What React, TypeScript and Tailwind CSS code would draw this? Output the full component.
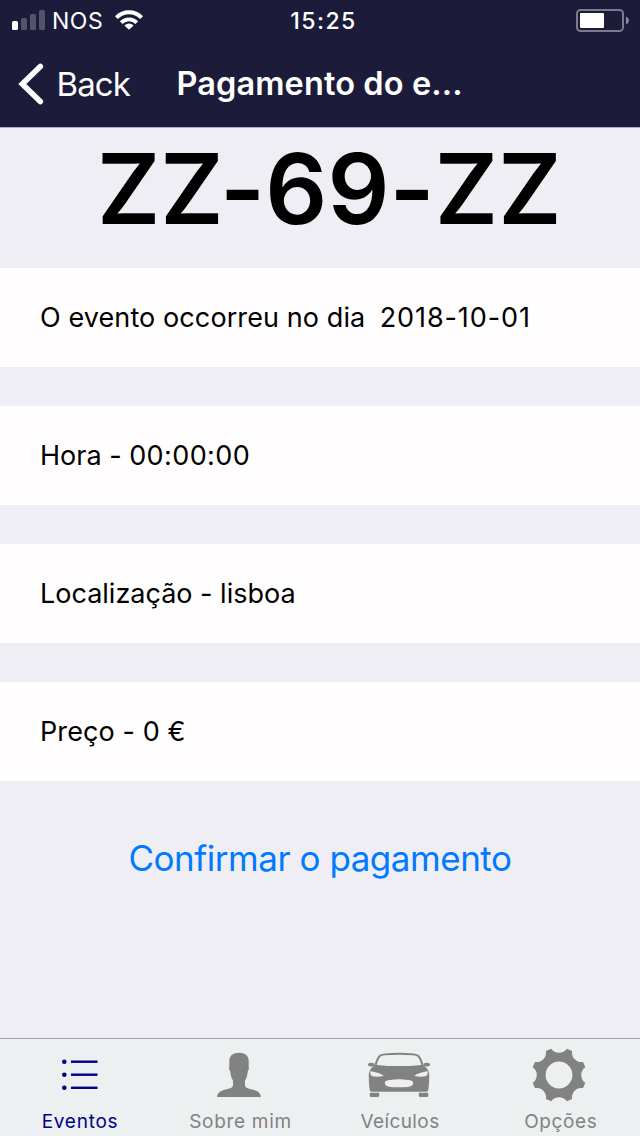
import type { ReactNode } from "react";

function StatusBar() {
  return (
    <div className="grid h-[41px] grid-cols-3 items-center text-white">
      <div className="flex items-center pl-3">
        <svg width="33" height="20" viewBox="0 0 33 20" className="mb-px shrink-0">
          <rect x="0" y="11" width="6" height="9" rx="1.5" fill="#fff" />
          <rect x="9" y="8" width="6" height="12" rx="1.5" fill="#53536b" />
          <rect x="18" y="4" width="6" height="16" rx="1.5" fill="#53536b" />
          <rect x="27" y="0" width="6" height="20" rx="1.5" fill="#53536b" />
        </svg>
        <span className="ml-[7px] pt-[2px] text-[23px] leading-none tracking-[0.5px]">NOS</span>
        <svg width="28" height="20" viewBox="0 0 28 20" className="mb-px ml-[12px] shrink-0">
          <g fill="none" stroke="#fff" strokeWidth="4">
            <path d="M1.4 7.6A17.6 17.6 0 0 1 26.6 7.6" />
            <path d="M6.2 12.6A11 11 0 0 1 21.8 12.6" strokeWidth="3.8" />
          </g>
          <path d="M14 19.8L9.4 15.4Q14 11.6 18.6 15.4Z" fill="#fff" />
        </svg>
      </div>
      <div className="pt-[2px] pl-[7px] text-center text-[23px] leading-none font-medium tracking-[1.5px]">15:25</div>
      <div className="flex justify-end pr-[11px]">
        <svg width="53" height="23" viewBox="0 0 53 23">
          <rect x="1" y="1" width="46" height="21" rx="3.5" fill="none" stroke="#7b7b8d" strokeWidth="2" />
          <rect x="4" y="4" width="24" height="15" rx="1" fill="#fff" />
          <path d="M50 7.5Q53 8.8 53 11.5T50 15.5Z" fill="#8b8b9b" />
        </svg>
      </div>
    </div>
  );
}

function NavBar() {
  return (
    <div className="flex h-[86px] items-center pl-[18px] text-white">
      <svg width="26" height="42" viewBox="0 0 26 42" className="mb-px shrink-0">
        <path d="M22.3 3.4L4.3 21L22.3 38.6" fill="none" stroke="#fff" strokeWidth="5.6" strokeLinecap="round" strokeLinejoin="miter" />
      </svg>
      <span className="ml-[12.5px] text-[33px] leading-none tracking-[-0.9px]">Back</span>
      <h1 className="ml-[46.5px] text-[32.5px] leading-none font-semibold tracking-[0.1px] whitespace-nowrap">Pagamento do e...</h1>
    </div>
  );
}

function Row({ children }: { children: ReactNode }) {
  return (
    <div className="flex h-[99px] items-center bg-[#fffdfe] pl-10 text-[27px] leading-none whitespace-pre">
      <p>{children}</p>
    </div>
  );
}

function ListIcon() {
  return (
    <svg width="36" height="52" viewBox="0 0 36 52" className="mr-px">
      {[11.7, 24.7, 37.8].map((y) => (
        <g key={y} fill="#00008b">
          <circle cx="2.3" cy={y} r="2.3" />
          <rect x="9" y={y - 1.2} width="26.5" height="2.4" />
        </g>
      ))}
    </svg>
  );
}

function PersonIcon() {
  return (
    <svg width="46" height="52" viewBox="0 0 46 52" fill="#828282" className="mr-0.5">
      <path d="M23 2.7C17.2 2.7 13.3 5.5 13.3 11V16.5C12.7 18.5 13.4 20 14.2 21C14.5 25.5 15.6 28.4 17 30.6V35C17 37.4 14.5 38.3 10.5 39.3C4.7 40.7 1.5 42.5 1 46.9H45C44.5 42.5 41.3 40.7 35.5 39.3C31.5 38.3 29 37.4 29 35V30.6C30.4 28.4 31.5 25.5 31.8 21C32.6 20 33.3 18.5 32.7 16.5V11C32.7 5.5 28.8 2.7 23 2.7Z" />
    </svg>
  );
}

function CarIcon() {
  return (
    <svg width="62" height="52" viewBox="0 0 62 52" className="mr-0.5">
      <g fill="#828282">
        <path d="M10.5 5.8C12 4.3 14 3.8 17 3.5C26 2.6 36 2.6 45 3.5C48 3.8 50 4.3 51.5 5.8C53.2 8 54.6 11.5 55.6 15.2L58.5 18C60.3 20.2 61.2 22 61.2 24.5C61.2 30 61 36 60.2 40.2C59.8 41.6 58.6 41.7 57 41.7H5C3.4 41.7 2.2 41.6 1.8 40.2C1 36 .8 30 .8 24.5C.8 22 1.7 20.2 3.5 18L6.4 15.2C7.4 11.5 8.8 8 10.5 5.8Z" />
        <ellipse cx="3.2" cy="14.6" rx="3.2" ry="1.9" />
        <ellipse cx="58.8" cy="14.6" rx="3.2" ry="1.9" />
        <path d="M1.8 42.8H11.2V45.8Q11.2 47 10 47H3Q1.8 47 1.8 45.8Z" />
        <path d="M50.8 42.8H60.2V45.8Q60.2 47 59 47H52Q50.8 47 50.8 45.8Z" />
      </g>
      <g fill="#ecf0f1">
        <path d="M12 7.2C13 6 14.3 5.6 17 5.3C26 4.5 36 4.5 45 5.3C47.7 5.6 49 6 50 7.2C51.6 9.3 52.6 11.8 53.3 14.9C38 16.5 24 16.5 8.7 14.9C9.4 11.8 10.4 9.3 12 7.2Z" />
        <path d="M2.2 21.2C7.5 22 13.5 23.5 15.7 26C11 27 5.2 27.2 3.3 25.6C2.4 24.6 2 23 2.2 21.2Z" />
        <path d="M59.8 21.2C54.5 22 48.5 23.5 46.3 26C51 27 56.8 27.2 58.7 25.6C59.6 24.6 60 23 59.8 21.2Z" />
        <path d="M22 30Q31 28.3 40 30C43.5 30.2 45.2 31.2 45.2 33C45.2 35.2 43 36.8 39.5 37Q31 37.7 22.5 37C19 36.8 16.8 35.2 16.8 33C16.8 31.2 18.5 30.2 22 30Z" />
      </g>
    </svg>
  );
}

const polar = (deg: number, r: number) => {
  const a = (deg * Math.PI) / 180;
  return `${(27 + r * Math.cos(a)).toFixed(2)} ${(25 + r * Math.sin(a)).toFixed(2)}`;
};

const gearPath =
  Array.from({ length: 8 }, (_, i) => {
    const c = i * 45;
    return `${i === 0 ? "M" : "L"}${polar(c - 16.5, 27.4)}A9.5 9.5 0 0 0 ${polar(c + 16.5, 27.4)}`;
  }).join("") + "ZM40.4 25A13.4 13.4 0 1 0 13.6 25A13.4 13.4 0 1 0 40.4 25Z";

function GearIcon() {
  return (
    <svg width="54" height="54" viewBox="0 -2 54 54" className="mr-0.5">
      <path d={gearPath} fill="#828282" fillRule="evenodd" />
    </svg>
  );
}

function Tab({ icon, children, className }: { icon: ReactNode; children: ReactNode; className: string }) {
  return (
    <div className="flex flex-col items-center pt-[11px]">
      <div className="flex h-[52px] items-end">{icon}</div>
      <span className={`mt-[10px] text-[19px] leading-none whitespace-nowrap ${className}`}>{children}</span>
    </div>
  );
}

export default function App() {
  return (
    <div className="flex h-[1136px] w-[640px] flex-col overflow-hidden bg-[#efeef4] font-['Inter',sans-serif] text-black">
      <header className="h-[127px] shrink-0 bg-[#1c1c3a]">
        <StatusBar />
        <NavBar />
      </header>
      <main className="flex flex-1 flex-col border-t border-[#b1afba]">
        <div className="flex h-[140px] shrink-0 justify-center pt-[12px] pl-[18.5px] text-[97px] leading-none font-semibold tracking-[0.1px]">
          ZZ-69-ZZ
        </div>
        <div className="flex flex-col gap-[39px]">
          <Row>
            <span className="tracking-[0.1px]">{"O evento occorreu no dia  "}</span>
            <span className="-ml-px tracking-[0.9px]">2018-10-01</span>
          </Row>
          <Row>
            Hora - <span className="tracking-[0.4px]">00:00:00</span>
          </Row>
          <Row>Localização - lisboa</Row>
          <Row>
            <span className="tracking-[0.1px]">Preço - 0 €</span>
          </Row>
        </div>
        <button className="mt-[60px] self-center text-[35px] leading-none tracking-[-0.47px] text-[#007aff]">
          Confirmar o pagamento
        </button>
      </main>
      <nav className="grid h-[98px] shrink-0 grid-cols-4 border-t border-[#a4a6a9] bg-[#ecf0f1]">
        <Tab icon={<ListIcon />} className="tracking-[0.75px] text-[#00008b]">Eventos</Tab>
        <Tab icon={<PersonIcon />} className="pl-px tracking-[0.7px] text-[#828282]">Sobre mim</Tab>
        <Tab icon={<CarIcon />} className="tracking-[0.4px] text-[#828282]">Veículos</Tab>
        <Tab icon={<GearIcon />} className="pl-[1.5px] tracking-[0.6px] text-[#828282]">Opções</Tab>
      </nav>
    </div>
  );
}
